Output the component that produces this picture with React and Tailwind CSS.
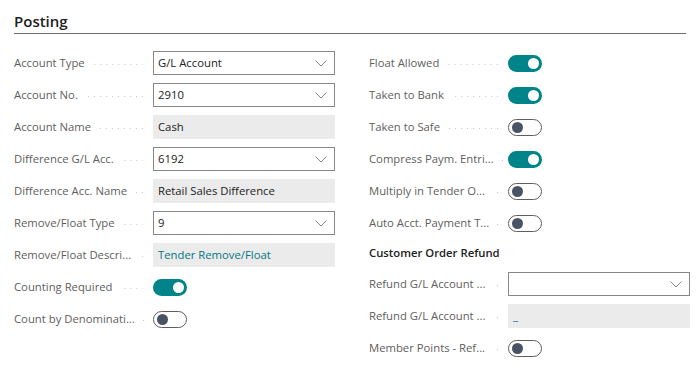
import React from 'react';

const leftRows = [
  { label: 'Account Type', type: 'select', value: 'G/L Account' },
  { label: 'Account No.', type: 'select', value: '2910' },
  { label: 'Account Name', type: 'readonly', value: 'Cash' },
  { label: 'Difference G/L Acc.', type: 'select', value: '6192' },
  { label: 'Difference Acc. Name', type: 'readonly', value: 'Retail Sales Difference' },
  { label: 'Remove/Float Type', type: 'select', value: '9' },
  { label: 'Remove/Float Descri...', type: 'readonly', value: 'Tender Remove/Float', link: true },
  { label: 'Counting Required', type: 'toggle', value: true },
  { label: 'Count by Denominati...', type: 'toggle', value: false },
];

const rightRows = [
  { label: 'Float Allowed', type: 'toggle', value: true },
  { label: 'Taken to Bank', type: 'toggle', value: true },
  { label: 'Taken to Safe', type: 'toggle', value: false },
  { label: 'Compress Paym. Entri...', type: 'toggle', value: true },
  { label: 'Multiply in Tender O...', type: 'toggle', value: false },
  { label: 'Auto Acct. Payment T...', type: 'toggle', value: false },
];

const refundRows = [
  { label: 'Refund G/L Account ...', type: 'select', value: '' },
  { label: 'Refund G/L Account ...', type: 'readonly', value: '_', link: true },
  { label: 'Member Points - Ref...', type: 'toggle', value: false },
];

const Chevron = () => (
  <svg width="12" height="7" viewBox="0 0 12 7" className="shrink-0">
    <polyline points="0.5,0.5 6,6 11.5,0.5" fill="none" stroke="#8a8886" strokeWidth="1" />
  </svg>
);

const Toggle = ({ on }) =>
  on ? (
    <div className="w-[34px] h-[17px] rounded-full bg-[#008489] flex items-center justify-end pr-[3px]">
      <div className="w-[11px] h-[11px] rounded-full bg-white" />
    </div>
  ) : (
    <div className="w-[34px] h-[17px] rounded-full border border-[#605e5c] bg-white flex items-center pl-[3px]">
      <div className="w-[11px] h-[11px] rounded-full bg-[#4a5265]" />
    </div>
  );

const Field = ({ row }) => {
  if (row.type === 'toggle') return <Toggle on={row.value} />;
  if (row.type === 'readonly') {
    return (
      <div className={`w-[182px] h-[24px] bg-[#ebebeb] flex items-center pl-[5px] ${row.link ? 'text-[#00787f]' : 'text-[#212121]'}`}>
        {row.value}
      </div>
    );
  }
  return (
    <div className="w-[182px] h-[24px] border border-[#8a8886] bg-white flex items-center justify-between pl-[4px] pr-[7px] text-[#212121]">
      <span>{row.value}</span>
      <Chevron />
    </div>
  );
};

const Row = ({ row }) => (
  <div className="h-[32px] flex items-center">
    <div className="w-[139px] flex items-center shrink-0">
      <span className="text-[#605e5c] whitespace-nowrap">{row.label}</span>
      <div className="flex-1 ml-[8px] mr-[10px] mt-[3px] h-px min-w-[1px] bg-[linear-gradient(to_left,#c8c6c4_1px,transparent_1px)] bg-[length:6px_1px] bg-right bg-repeat-x" />
    </div>
    <Field row={row} />
  </div>
);

export default function App() {
  return (
    <div className="w-[700px] h-[370px] bg-white px-[14px] pt-[10px] overflow-hidden font-['Segoe_UI','Open_Sans',sans-serif] text-[11.3px]">
      <div className="border-b border-[#6b6f76] pb-[1px]">
        <h2 className="text-[15px] leading-[22px] font-semibold text-[#212121]">Posting</h2>
      </div>
      <div className="grid grid-cols-[321px_321px] gap-x-[34px] pt-[13px]">
        <div>
          {leftRows.map((row, i) => (
            <Row key={i} row={row} />
          ))}
        </div>
        <div>
          {rightRows.map((row, i) => (
            <Row key={i} row={row} />
          ))}
          <div className="h-[29px] flex items-center font-semibold text-[#212121]">Customer Order Refund</div>
          {refundRows.map((row, i) => (
            <Row key={i} row={row} />
          ))}
        </div>
      </div>
    </div>
  );
}
